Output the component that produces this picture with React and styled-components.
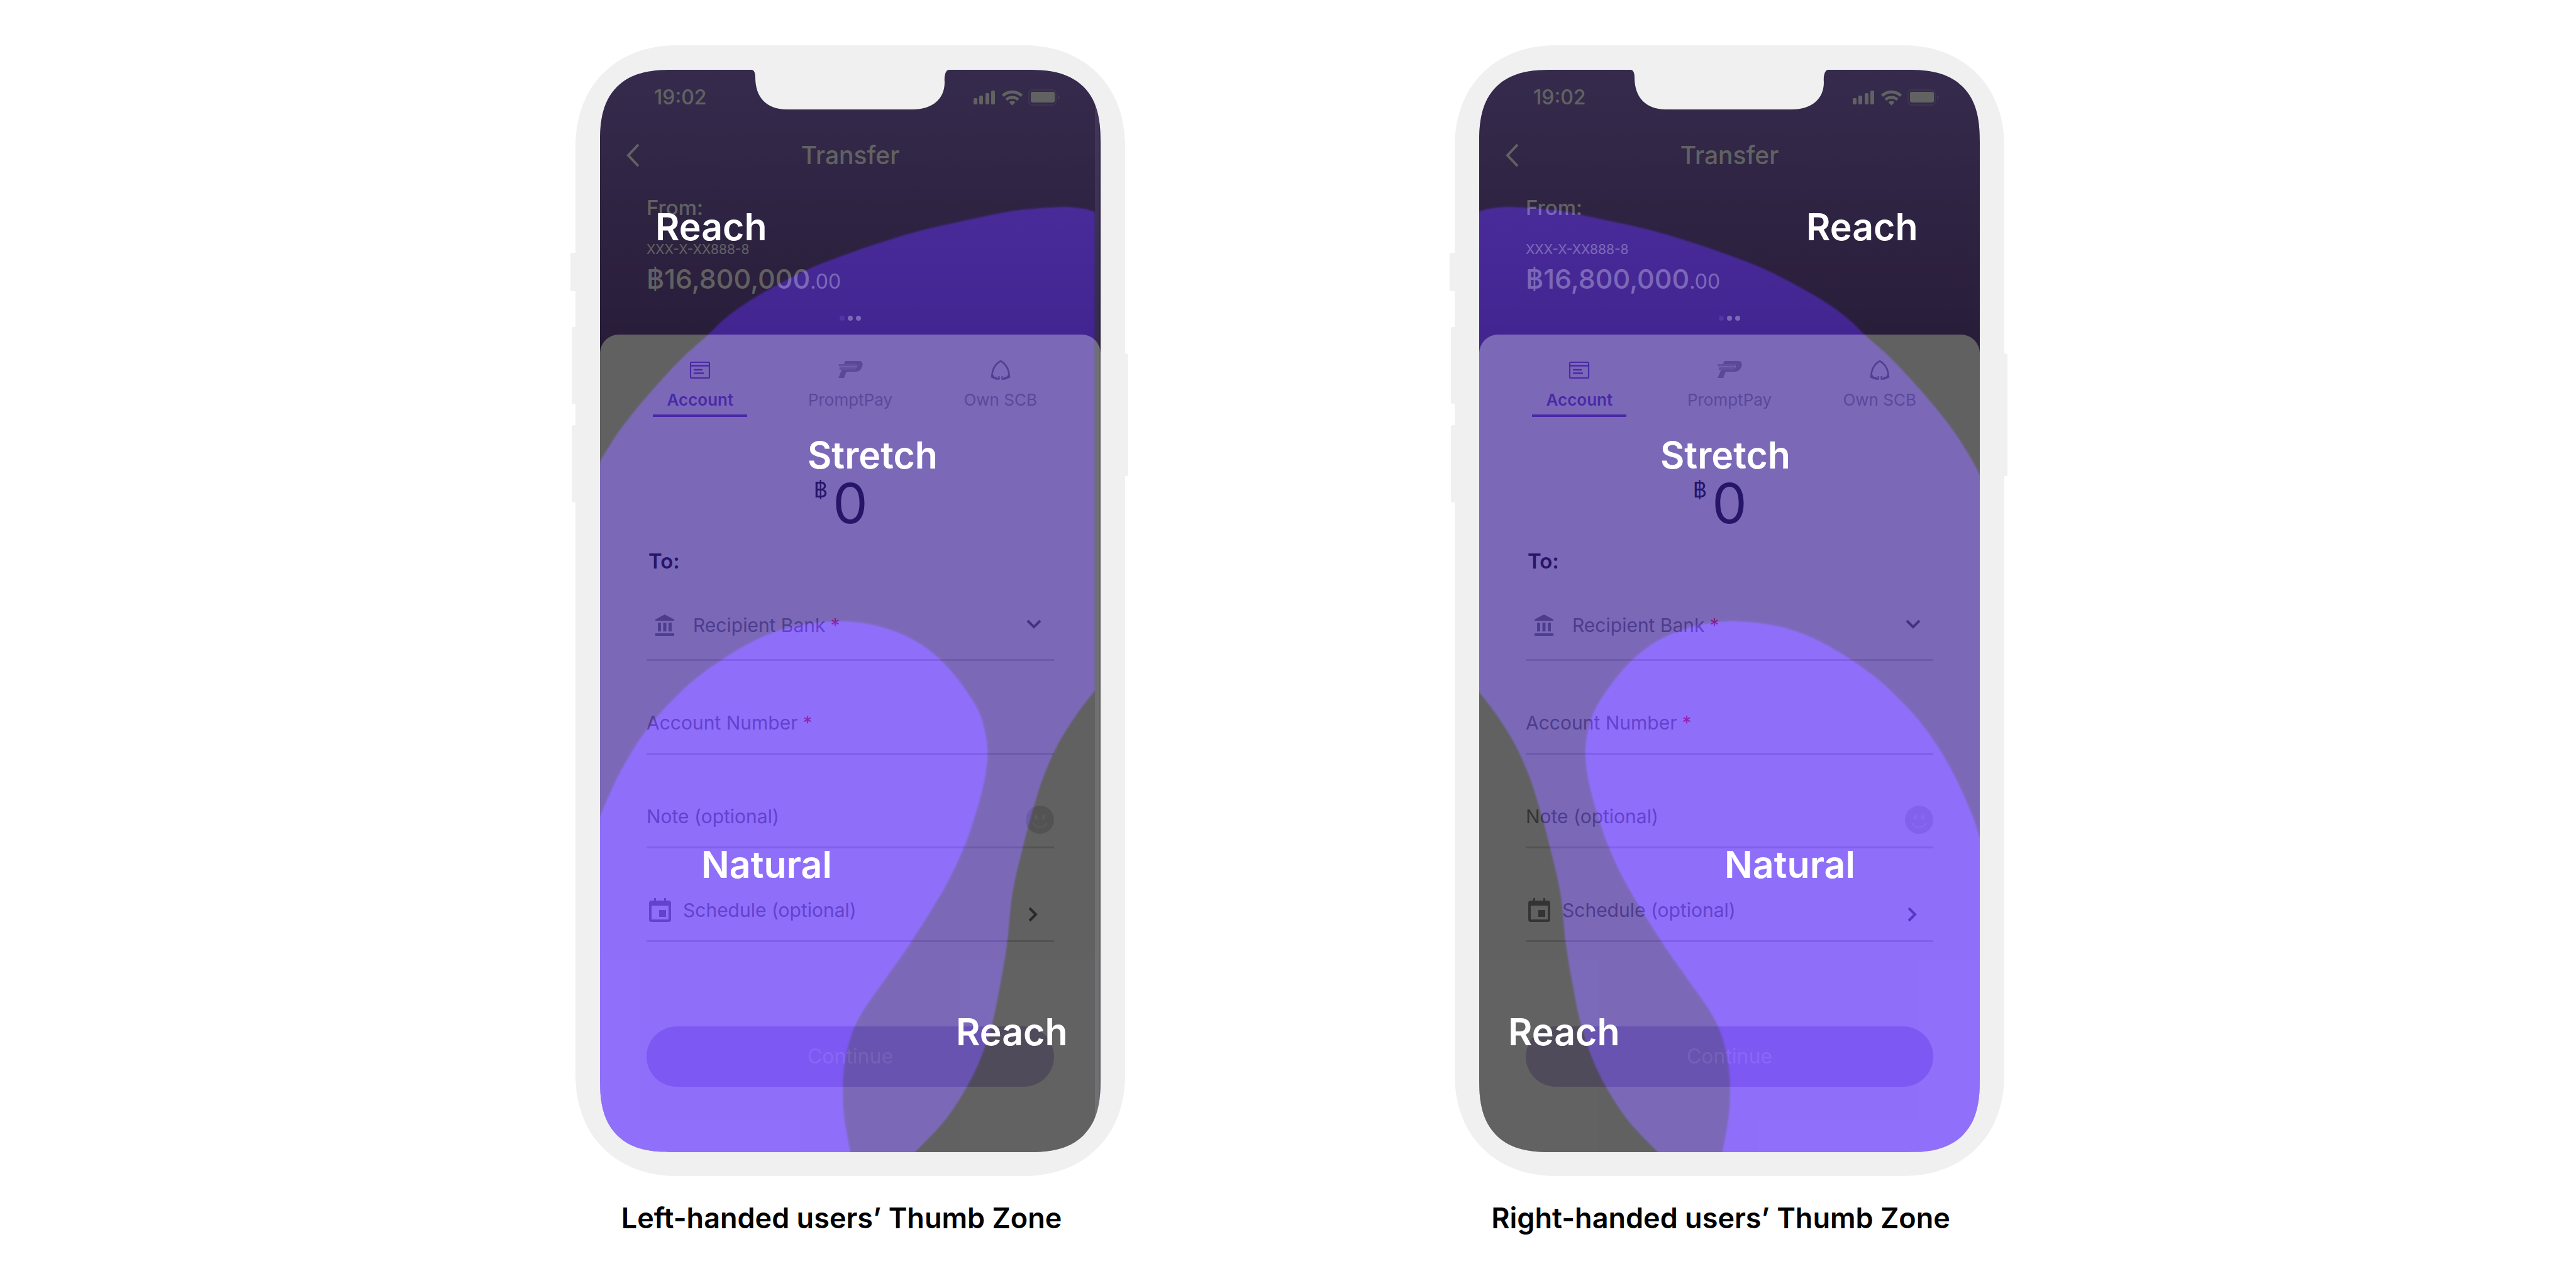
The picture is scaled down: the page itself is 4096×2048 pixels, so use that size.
import React, { useId } from "react";
import styled, { createGlobalStyle } from "styled-components";

const GlobalStyle = createGlobalStyle`
  *, *::before, *::after { box-sizing: border-box; }
  body {
    margin: 0;
    background: #fff;
    font-family: Inter, Roboto, "Liberation Sans", sans-serif;
  }
  button, input, select {
    margin: 0;
    padding: 0;
    border: 0;
    background: none;
    color: inherit;
    font: inherit;
    appearance: none;
    outline: none;
  }
`;

/* ---------- page ---------- */

const Page = styled.main`
  min-height: 100vh;
  display: flex;
  justify-content: center;
  align-items: flex-start;
  gap: 524px;
  padding: 72px 0 64px 6px;
`;

const Figure = styled.figure`
  margin: 0;
  display: flex;
  flex-direction: column;
`;

const Caption = styled.figcaption`
  margin-top: 35px;
  padding-right: 28px;
  text-align: center;
  font-size: 45px;
  line-height: 64px;
  font-weight: 600;
  color: #000;
`;

/* ---------- phone ---------- */

const Frame = styled.div`
  position: relative;
  padding: 39px 39px 38px;
  background: #f0f0f0;
  border-radius: 150px;
  @supports (corner-shape: superellipse(1.1)) {
    border-radius: 162px;
    corner-shape: superellipse(1.12);
  }
`;

const SideKey = styled.span`
  position: absolute;
  ${(p) => p.$side}: -${(p) => p.$depth}px;
  top: ${(p) => p.$top}px;
  width: 24px;
  height: ${(p) => p.$length}px;
  border-radius: 3px;
  background: #f0f0f0;
`;

const Screen = styled.div`
  position: relative;
  width: 796px;
  overflow: hidden;
  background: linear-gradient(#8c70c6 0, #684a94 460px);
  border-radius: 98px;
  @supports (corner-shape: superellipse(1.1)) {
    border-radius: 116px;
    corner-shape: superellipse(1.38);
  }
`;

const Notch = styled.svg`
  position: absolute;
  top: -1px;
  left: 241px;
  width: 314px;
  height: 64px;
  fill: #f0f0f0;
`;

/* ---------- app header ---------- */

const StatusBar = styled.div`
  height: 88px;
  padding: 0 64px 0 86px;
  display: flex;
  align-items: center;
  justify-content: space-between;
  color: #fff;
  font-size: 32px;
  line-height: 40px;
  font-weight: 500;
`;

const StatusIcons = styled.svg`
  width: 138px;
  height: 26px;
`;

const TitleBar = styled.header`
  height: 96px;
  padding: 0 40px;
  display: grid;
  grid-template-columns: 1fr auto 1fr;
  align-items: center;
  color: #fff;
`;

const IconButton = styled.button`
  display: flex;
  justify-self: start;
`;

const Title = styled.h1`
  margin: 0;
  font-size: 39px;
  line-height: 50px;
  font-weight: 500;
`;

const FromCard = styled.section`
  padding: 10px 74px 22px;
  display: flex;
  flex-direction: column;
  color: #fff;
`;

const FromLabel = styled.span`
  font-size: 33px;
  line-height: 50px;
  font-weight: 500;
`;

const AccountNo = styled.span`
  margin-top: 26px;
  font-size: 21px;
  line-height: 32px;
  font-weight: 400;
`;

const Balance = styled.span`
  font-size: 43px;
  line-height: 60px;
  font-weight: 500;
`;

const Cents = styled.small`
  font-size: 32px;
  line-height: 32px;
  font-weight: 400;
`;

const Dots = styled.div`
  margin-top: 29px;
  display: flex;
  justify-content: center;
  gap: 5px;
`;

const Dot = styled.i`
  width: 8px;
  height: 8px;
  border-radius: 50%;
  background: ${(p) => (p.$dim ? "#9673d7" : "#fff")};
`;

/* ---------- sheet ---------- */

const Sheet = styled.section`
  padding-top: 40px;
  padding-bottom: 104px;
  border-radius: 30px 30px 0 0;
  background: #fff;
`;

const Tabs = styled.nav`
  padding: 0 40px;
  display: grid;
  grid-template-columns: repeat(3, 1fr);
  justify-items: center;
`;

const Tab = styled.button`
  width: 150px;
  padding-bottom: 5px;
  display: flex;
  flex-direction: column;
  align-items: center;
  gap: 14px;
  border-bottom: 4px solid ${(p) => (p.$active ? "#7f56d0" : "transparent")};
  color: ${(p) => (p.$active ? "#8058d2" : "#aea8ad")};
  font-size: 26px;
  line-height: 36px;
  font-weight: ${(p) => (p.$active ? 600 : 400)};
  white-space: nowrap;
`;

const TabIcon = styled.svg`
  width: 42px;
  height: 32px;
`;

const Amount = styled.div`
  margin-top: 83px;
  display: grid;
  grid-template-columns: 1fr auto 1fr;
  color: #24242f;
`;

const Currency = styled.label`
  justify-self: end;
  padding: 13px 6px 0 0;
  font-size: 34px;
  line-height: 40px;
  font-weight: 400;
`;

const AmountInput = styled.input`
  width: 60px;
  height: 108px;
  text-align: center;
  font-size: 88px;
  line-height: 108px;
  font-weight: 400;
`;

const Form = styled.form`
  padding: 14px 74px 0;
  display: flex;
  flex-direction: column;
`;

const SectionTitle = styled.h2`
  margin: 0 0 54px;
  padding-left: 3px;
  color: #24242f;
  font-size: 33px;
  line-height: 48px;
  font-weight: 600;
`;

const Fields = styled.div`
  display: flex;
  flex-direction: column;
  gap: 74px;
`;

const Row = styled.div`
  display: flex;
  align-items: center;
  height: ${(p) => (p.$tall ? 81 : 75)}px;
  padding-bottom: ${(p) => (p.$tall ? 30 : 24)}px;
  border-bottom: 3px solid #dad7da;
  color: #8a8a8e;
  font-size: 30px;
  line-height: 48px;
  font-weight: 400;
`;

const RowButton = styled(Row).attrs({ as: "button", type: "button" })`
  padding-bottom: 24px;
  text-align: left;
  border-bottom: 3px solid #dad7da;
`;

const FieldLabel = styled.label`
  flex: none;
`;

const FieldText = styled.span`
  flex: 1;
`;

const Required = styled.span`
  margin-left: 8px;
  color: #ff3b46;
`;

const FieldInput = styled.input`
  flex: 1;
  min-width: 0;
  height: 48px;
`;

const FieldSelect = styled.select`
  flex: 1;
  min-width: 0;
  height: 48px;
`;

const Icon = styled.svg`
  flex: none;
  width: ${(p) => p.$w}px;
  height: ${(p) => p.$h}px;
  margin: 0 ${(p) => p.$after || 0}px 0 ${(p) => p.$before || 0}px;
`;

const LowIcon = styled(Icon)`
  align-self: flex-end;
`;

const EmojiButton = styled.button`
  align-self: flex-end;
  display: flex;
  margin-bottom: -4px;
`;

const Continue = styled.button`
  margin-top: 134px;
  height: 96px;
  border-radius: 48px;
  background: #d0c4ea;
  color: #eeeaf8;
  font-size: 32px;
  line-height: 48px;
  font-weight: 400;
  text-align: center;
`;

/* ---------- thumb zones ---------- */

const Zones = styled.svg`
  position: absolute;
  inset: 0;
  width: 100%;
  height: 100%;
  pointer-events: none;
`;

const ZoneLabel = styled.span`
  position: absolute;
  left: ${(p) => p.$x}px;
  top: ${(p) => p.$y}px;
  color: #fff;
  font-size: 59px;
  line-height: 72px;
  font-weight: 600;
`;

const STRETCH_TOP = [
  [787, 226], [770, 221], [735, 218], [676, 222], [641, 227], [583, 239],
  [512, 255], [448, 274], [384, 296], [331, 317], [278, 344], [232, 371],
  [197, 397], [170, 423], [132, 457], [97, 494], [62, 534], [33, 571],
  [15, 598], [0, 623], [-11, 644], [-30, 680],
];

const STRETCH_SIDE = [
  [501, 1721], [548, 1671], [583, 1618], [606, 1570], [624, 1515], [635, 1463],
  [647, 1392], [656, 1309], [673, 1234], [690, 1171], [706, 1122], [729, 1071],
  [758, 1025], [787, 987],
];

const NATURAL = [
  [-30, 1268], [-11, 1221], [0, 1188], [27, 1127], [56, 1076], [85, 1036],
  [115, 1003], [150, 970], [197, 936], [243, 909], [284, 892], [325, 882],
  [378, 877], [419, 880], [460, 890], [501, 908], [539, 936], [571, 972],
  [600, 1016], [612, 1052], [616, 1087], [612, 1125], [603, 1163], [592, 1199],
  [577, 1240], [548, 1300], [495, 1386], [454, 1445], [419, 1495], [401, 1531],
  [390, 1572], [386, 1616], [388, 1664], [398, 1721],
];

// Catmull-Rom spline through the points, written as cubic segments
function curve(points) {
  let d = "";
  for (let i = 0; i < points.length - 1; i += 1) {
    const a = points[i - 1] || points[i];
    const b = points[i];
    const c = points[i + 1];
    const e = points[i + 2] || c;
    d += ` C${b[0] + (c[0] - a[0]) / 6} ${b[1] + (c[1] - a[1]) / 6}`;
    d += ` ${c[0] - (e[0] - b[0]) / 6} ${c[1] - (e[1] - b[1]) / 6} ${c[0]} ${c[1]}`;
  }
  return d;
}

const stretchPath =
  `M787 226${curve(STRETCH_TOP)} L-30 1760 L470 1760 L501 1721${curve(STRETCH_SIDE)} Z`;
const naturalPath = `M-30 1268${curve(NATURAL)} L405 1760 L-30 1760 Z`;

const LABELS = {
  left: [
    ["Reach", 88, 214],
    ["Stretch", 330, 577],
    ["Natural", 161, 1228],
    ["Reach", 566, 1494],
  ],
  right: [
    ["Reach", 520, 214],
    ["Stretch", 288, 577],
    ["Natural", 390, 1228],
    ["Reach", 46, 1494],
  ],
};

function ThumbZones({ hand }) {
  const blurId = useId();
  const isLeft = hand === "left";
  return (
    <>
      <Zones viewBox="0 0 796 1721" preserveAspectRatio="none" aria-hidden="true">
        <defs>
          <filter id={blurId} x="-10%" y="-10%" width="120%" height="120%">
            <feGaussianBlur stdDeviation="1.6" />
          </filter>
        </defs>
        <g opacity="0.615">
          <rect width="796" height="1721" fill="#000" />
          {isLeft && <rect x="787" width="7" height="1721" fill="#18161c" />}
          <g
            filter={`url(#${blurId})`}
            transform={isLeft ? undefined : "translate(785 0) scale(-1 1)"}
          >
            <path d={stretchPath} fill="#2c0a8d" />
            <path d={naturalPath} fill="#4b15f7" />
          </g>
        </g>
      </Zones>
      {LABELS[hand].map(([text, x, y]) => (
        <ZoneLabel key={`${text}${y}`} $x={x} $y={y}>
          {text}
        </ZoneLabel>
      ))}
    </>
  );
}

/* ---------- drawings ---------- */

function Status() {
  return (
    <StatusIcons viewBox="0 0 138 26" fill="#fff" aria-hidden="true">
      <rect x="0" y="14" width="6" height="10" rx="2" />
      <rect x="9" y="10" width="6" height="14" rx="2" />
      <rect x="19" y="6" width="6" height="18" rx="2" />
      <rect x="28" y="2" width="6" height="22" rx="2" />
      <path d="M45 8.500a23.500 23.500 0 0 1 33 0l-3 3.600a19 19 0 0 0-27 0z" />
      <path d="M50.500 14.800a16 16 0 0 1 22 0l-3.200 3.400a11 11 0 0 0-15.600 0z" />
      <path d="M56.500 20.500a8 8 0 0 1 10 0l-5 5.200z" />
      <rect x="88" y="1" width="43" height="24" rx="6" fill="none" stroke="#fff" strokeOpacity=".2" strokeWidth="2" />
      <rect x="91" y="4" width="38" height="17" rx="3" />
      <path d="M134 9.500c3.500 1 3.500 6 0 7z" opacity=".3" />
    </StatusIcons>
  );
}

function AccountIcon() {
  return (
    <TabIcon viewBox="0 0 42 32" fill="none" stroke="currentColor" strokeWidth="2.200">
      <rect x="6" y="4" width="30" height="25" rx="1.500" />
      <path d="M6 9.500h30" strokeWidth="2.500" />
      <path d="M11 16h14M11 21.500h16" strokeWidth="2.500" />
    </TabIcon>
  );
}

function PromptPayIcon() {
  return (
    <TabIcon viewBox="0 0 42 32" fill="currentColor">
      <path d="M13 2h22c6 0 6.500 5 5 9s-4.500 8-10 8H15l-4 10H2l5.500-13H26c5 0 7-9 3-9H10.500z" />
      <path d="M2 7h29l-1 3.500H3zM4.500 12h26l-2.500 4H3.500z" opacity=".75" />
    </TabIcon>
  );
}

function OwnIcon() {
  return (
    <TabIcon viewBox="0 0 42 32" fill="none" stroke="#948e9c" strokeWidth="2.600">
      <path d="M19.500 30.500h-5L7 27.500 8 20c1.500-7 5.500-14 13-18 7.500 4 11.500 11 13 18l1 7.500-7.500 3h-5" />
      <path d="M18.500 26v5M23.500 26v5" strokeWidth="2" />
      <path d="M8 24.500l2 3.500 6 2M34 24.500l-2 3.500-6 2" strokeWidth="3" />
    </TabIcon>
  );
}

function BankIcon() {
  return (
    <Icon $w={30} $h={34} $before={14} $after={30} viewBox="0 0 30 34" fill="currentColor">
      <path d="M15 0l15 8v2H0V8zM4 13h5v14H4zM12.500 13h5v14h-5zM21 13h5v14h-5zM0 30h30v4H0z" />
    </Icon>
  );
}

function CalendarIcon() {
  return (
    <Icon $w={35} $h={38} $before={4} $after={19} viewBox="0 0 35 38" fill="currentColor">
      <path
        fillRule="evenodd"
        d="M8 0h3v4h13V0h3v4h4a4 4 0 0 1 4 4v26a4 4 0 0 1-4 4H4a4 4 0 0 1-4-4V8a4 4 0 0 1 4-4h4zM4 12v22h27V12z"
      />
      <path d="M16 19h11v11H16z" />
    </Icon>
  );
}

function Smiley() {
  return (
    <Icon $w={45} $h={45} viewBox="0 0 45 45" aria-hidden="true">
      <circle cx="22.500" cy="22.500" r="22.500" fill="#dbdbdd" />
      <g fill="#efeff1">
        <ellipse cx="16.500" cy="18.500" rx="2.500" ry="4" />
        <ellipse cx="28.500" cy="18.500" rx="2.500" ry="4" />
      </g>
      <path d="M11.500 27.500c4 9 18 9 22 0" fill="none" stroke="#efeff1" strokeWidth="2.500" />
    </Icon>
  );
}

/* ---------- screens ---------- */

function TransferApp({ id }) {
  return (
    <>
      <StatusBar>
        <span>19:02</span>
        <Status />
      </StatusBar>
      <TitleBar>
        <IconButton type="button" aria-label="Back">
          <Icon $w={24} $h={38} viewBox="0 0 24 38" fill="none" stroke="currentColor" strokeWidth="4">
            <path d="M21 2L5 19l16 17" />
          </Icon>
        </IconButton>
        <Title>Transfer</Title>
      </TitleBar>
      <FromCard>
        <FromLabel>From:</FromLabel>
        <AccountNo>XXX-X-XX888-8</AccountNo>
        <Balance>
          ฿16,800,000<Cents>.00</Cents>
        </Balance>
        <Dots>
          <Dot $dim />
          <Dot />
          <Dot />
        </Dots>
      </FromCard>
      <Sheet>
        <Tabs>
          <Tab type="button" $active>
            <AccountIcon />
            Account
          </Tab>
          <Tab type="button">
            <PromptPayIcon />
            PromptPay
          </Tab>
          <Tab type="button">
            <OwnIcon />
            Own SCB
          </Tab>
        </Tabs>
        <Amount>
          <Currency htmlFor={`${id}-amount`}>฿</Currency>
          <AmountInput id={`${id}-amount`} inputMode="decimal" defaultValue="0" />
        </Amount>
        <Form>
          <SectionTitle>To:</SectionTitle>
          <Fields>
            <Row $tall>
              <BankIcon />
              <FieldLabel htmlFor={`${id}-bank`}>
                Recipient Bank<Required>*</Required>
              </FieldLabel>
              <FieldSelect id={`${id}-bank`} defaultValue="">
                <option value="" />
              </FieldSelect>
              <Icon $w={24} $h={20} $after={20} viewBox="0 0 24 20" fill="none" stroke="#6e6e72" strokeWidth="4">
                <path d="M2 3l10 10L22 3" />
              </Icon>
            </Row>
            <Row>
              <FieldLabel htmlFor={`${id}-number`}>
                Account Number<Required>*</Required>
              </FieldLabel>
              <FieldInput id={`${id}-number`} />
            </Row>
            <Row>
              <FieldLabel htmlFor={`${id}-note`}>Note (optional)</FieldLabel>
              <FieldInput id={`${id}-note`} />
              <EmojiButton type="button" aria-label="Add emoji">
                <Smiley />
              </EmojiButton>
            </Row>
            <RowButton>
              <CalendarIcon />
              <FieldText>Schedule (optional)</FieldText>
              <LowIcon $w={20} $h={34} $after={23} viewBox="0 0 20 34" fill="none" stroke="#6e6e72" strokeWidth="4">
                <path d="M4 7l10 10L4 27" />
              </LowIcon>
            </RowButton>
          </Fields>
          <Continue type="button">Continue</Continue>
        </Form>
      </Sheet>
    </>
  );
}

function Phone({ hand }) {
  return (
    <Frame>
      <SideKey $side="left" $depth={8} $top={330} $length={61} />
      <SideKey $side="left" $depth={6} $top={448} $length={122} />
      <SideKey $side="left" $depth={6} $top={604} $length={123} />
      <SideKey $side="right" $depth={5} $top={490} $length={195} />
      <Screen>
        <TransferApp id={hand} />
        <ThumbZones hand={hand} />
        <Notch viewBox="0 -1 314 64" aria-hidden="true">
          <path d="M0 -1V0c4 0 6 5 6 12C6 44 24 63 56 63H256C288 63 307 46 307 20C306 8 309 0 314 0V-1Z" />
        </Notch>
      </Screen>
    </Frame>
  );
}

export default function App() {
  return (
    <>
      <GlobalStyle />
      <Page>
        <Figure>
          <Phone hand="left" />
          <Caption>Left-handed users’ Thumb Zone</Caption>
        </Figure>
        <Figure>
          <Phone hand="right" />
          <Caption>Right-handed users’ Thumb Zone</Caption>
        </Figure>
      </Page>
    </>
  );
}
